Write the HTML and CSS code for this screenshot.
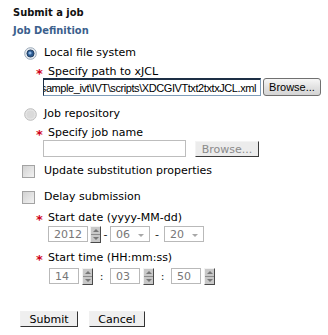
FILE: index.html
```html
<!DOCTYPE html>
<html lang="en">
<head>
    <meta charset="UTF-8">
    <title>Submit a job</title>
    <link rel="stylesheet" href="styles.css">
</head>
<body>
    <div class="page">
        <div class="title">Submit a job</div>
        <div class="section">Job Definition</div>

        <div class="option first">
            <svg class="radio" width="13" height="13" viewBox="0 0 13 13">
                <circle cx="6.5" cy="6.5" r="5.8" fill="#e9eef3" stroke="#9aa8b8"/>
                <circle cx="6.5" cy="6.5" r="3.6" fill="#2b5a90" stroke="#17304f" stroke-width="0.8"/>
                <circle cx="6" cy="6" r="1.6" fill="#8db6e4"/>
            </svg>
            <span>Local file system</span>
        </div>
        <div class="label"><span class="req">*</span>Specify path to xJCL</div>
        <div class="file-row">
            <div class="textbox active">
                <span class="value">sample_ivt\IVT\scripts\XDCGIVTtxt2txtxJCL.xml</span><span class="caret"></span>
            </div>
            <button class="browse">Browse...</button>
        </div>

        <div class="option second">
            <svg class="radio" width="13" height="13" viewBox="0 0 13 13">
                <circle cx="6.5" cy="6.5" r="5.8" fill="#e6e6e6" stroke="#bcbcbc"/>
                <circle cx="6.5" cy="6.5" r="4" fill="#dadada"/>
            </svg>
            <span>Job repository</span>
        </div>
        <div class="label"><span class="req">*</span>Specify job name</div>
        <div class="file-row small">
            <div class="textbox"></div>
            <button class="browse disabled" disabled>Browse...</button>
        </div>

        <div class="option check first-check">
            <span class="checkbox"></span>
            <span>Update substitution properties</span>
        </div>
        <div class="option check second-check">
            <span class="checkbox"></span>
            <span>Delay submission</span>
        </div>

        <div class="label date-label"><span class="req">*</span>Start date (yyyy-MM-dd)</div>
        <div class="widget-row">
            <span class="box year">2012</span>
            <span class="spin"><i></i><i></i></span>
            <span class="sep dash1">-</span>
            <span class="box combo">06<b></b></span>
            <span class="sep dash2">-</span>
            <span class="box combo">20<b></b></span>
        </div>

        <div class="label time-label"><span class="req">*</span>Start time (HH:mm:ss)</div>
        <div class="widget-row time">
            <span class="box num">14</span>
            <span class="spin"><i></i><i></i></span>
            <span class="sep colon">:</span>
            <span class="box num">03</span>
            <span class="spin"><i></i><i></i></span>
            <span class="sep colon">:</span>
            <span class="box num">50</span>
            <span class="spin"><i></i><i></i></span>
        </div>

        <div class="actions">
            <button class="btn submit">Submit</button>
            <button class="btn cancel">Cancel</button>
        </div>
    </div>
</body>
</html>
```

FILE: styles.css
```css
* {
    margin: 0;
    padding: 0;
    box-sizing: border-box;
}

body {
    background: #fff;
    color: #000;
    font-family: "DejaVu Sans", Verdana, sans-serif;
    font-size: 11px;
}

.page {
    padding: 6px 0 0 13px;
}

.title {
    height: 14px;
    line-height: 14px;
    font-family: "DejaVu Sans Condensed", "DejaVu Sans", sans-serif;
    font-weight: bold;
    color: #111;
}

.section {
    height: 14px;
    margin-top: 4px;
    line-height: 14px;
    font-family: "DejaVu Sans Condensed", "DejaVu Sans", sans-serif;
    font-weight: bold;
    color: #3b5f8d;
}

.option {
    display: flex;
    align-items: center;
    height: 14px;
    line-height: 14px;
}

.option.first {
    margin-top: 8px;
}

.option.second {
    margin-top: 11px;
}

.radio {
    margin: 0 7px 0 11px;
}

.label {
    display: flex;
    align-items: center;
    height: 13px;
    margin-top: 5px;
    padding-left: 23px;
    line-height: 13px;
}

.req {
    width: 12px;
    color: #d0021b;
    font-weight: bold;
    font-size: 13px;
    line-height: 13px;
    padding-top: 3px;
}

.file-row {
    display: flex;
    gap: 2px;
    height: 18px;
    margin-left: 30px;
}

.textbox {
    display: flex;
    justify-content: flex-end;
    align-items: center;
    width: 218px;
    overflow: hidden;
    white-space: nowrap;
    border: 1px solid #b5b5b5;
    background: #fff;
}

.textbox.active {
    border-color: #1d2f45 #7f9db9 #7f9db9 #1d2f45;
    border-width: 2px 1px 1px 1px;
    padding-right: 3px;
}

.value {
    font-family: "Liberation Sans", Arial, sans-serif;
    font-size: 11px;
    letter-spacing: -0.42px;
}

.caret {
    width: 1px;
    height: 13px;
    background: #000;
    margin-left: 1px;
}

.browse {
    width: 58px;
    height: 18px;
    font-family: "Liberation Sans", Arial, sans-serif;
    font-size: 11px;
    color: #000;
    border: 1px solid #707070;
    border-radius: 3px;
    background: linear-gradient(#f6f6f6, #e2e2e2 50%, #d4d4d4);
}

.file-row.small {
    height: 17px;
    margin-top: 1px;
    gap: 9px;
}

.file-row.small .textbox {
    width: 143px;
    border-color: #bdbdbd;
}

.browse.disabled {
    width: 64px;
    height: 16px;
    margin-top: 1px;
    font-family: "DejaVu Sans", Verdana, sans-serif;
    color: #8a8a8a;
    border-radius: 0;
    border-color: #f4f4f4 #3a3a3a #3a3a3a #f4f4f4;
    background: #ececec;
}

.check .checkbox {
    width: 13px;
    height: 13px;
    margin: 0 9px 0 9px;
    border: 1px solid #a3a3a3;
    background: linear-gradient(135deg, #d2d2d2, #f2f2f2);
}

.first-check {
    margin-top: 7px;
}

.second-check {
    margin-top: 12px;
}

.date-label {
    margin-top: 7px;
}

.widget-row {
    display: flex;
    align-items: center;
    height: 16px;
    margin: 2px 0 0 35px;
    color: #777;
}

.box {
    display: flex;
    align-items: center;
    height: 16px;
    padding-left: 5px;
    border: 1px solid #b9b9b9;
    background: #fff;
}

.box.year {
    width: 40px;
}

.box.combo {
    justify-content: space-between;
    width: 40px;
    padding-right: 5px;
}

.box.combo b {
    border-left: 3px solid transparent;
    border-right: 3px solid transparent;
    border-top: 3px solid #a8a8a8;
    margin-top: 2px;
}

.spin {
    display: flex;
    flex-direction: column;
    width: 11px;
    height: 17px;
    margin-left: 2px;
    border: 1px solid;
    border-color: #f2f2f2 #4a4a4a #4a4a4a #f2f2f2;
    background: #c8c8c8;
}

.spin i {
    display: flex;
    flex: 1;
    align-items: center;
    justify-content: center;
}

.spin i + i {
    border-top: 1px solid #8c8c8c;
}

.spin i::before {
    content: "";
    border-left: 3px solid transparent;
    border-right: 3px solid transparent;
    border-bottom: 3px solid #777;
}

.spin i + i::before {
    border-bottom: 0;
    border-top: 3px solid #777;
}

.sep {
    color: #222;
    text-align: center;
}

.dash1 {
    width: 9px;
}

.dash2 {
    width: 14px;
}

.time-label {
    margin-top: 9px;
}

.widget-row.time {
    margin-top: 4px;
    margin-left: 36px;
}

.box.num {
    width: 30px;
}

.time .spin {
    margin-left: 3px;
}

.colon {
    width: 17px;
}

.actions {
    display: flex;
    gap: 11px;
    margin: 27px 0 0 7px;
}

.btn {
    width: 58px;
    height: 16px;
    font-family: "DejaVu Sans", Verdana, sans-serif;
    font-size: 11px;
    color: #000;
    border: 1px solid;
    border-color: #f0f0f0 #333 #333 #f0f0f0;
    background: #efefef;
}

.btn.cancel {
    width: 56px;
}
```
